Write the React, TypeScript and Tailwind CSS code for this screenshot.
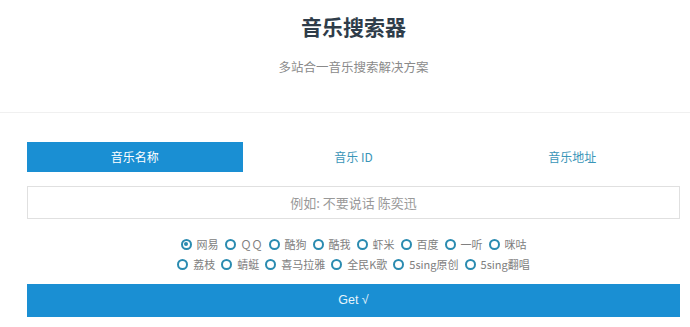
import React, { useState } from 'react';

const tabs = ['音乐名称', '音乐 ID', '音乐地址'];

const sources = [
  ['网易', 'ＱＱ', '酷狗', '酷我', '虾米', '百度', '一听', '咪咕'],
  ['荔枝', '蜻蜓', '喜马拉雅', '全民K歌', '5sing原创', '5sing翻唱'],
];

const Radio: React.FC<{ label: string; checked: boolean; onPick: () => void }> = ({ label, checked, onPick }) => (
  <label className="flex items-center gap-[5px] cursor-pointer" onClick={onPick}>
    <span className="w-[11px] h-[11px] rounded-full border-2 border-[#2a8bb0] flex items-center justify-center">
      {checked && <span className="w-[4px] h-[4px] rounded-full bg-[#2a8bb0]" />}
    </span>
    <span className="text-[11px] text-[#808080]">{label}</span>
  </label>
);

export default function App() {
  const [tab, setTab] = useState(0);
  const [source, setSource] = useState('网易');

  return (
    <div className="w-full overflow-hidden bg-white" style={{ fontFamily: '"Noto Sans CJK SC", "Noto Sans", sans-serif' }}>
      <div className="w-[707px]">
        <header className="h-[113px] border-b border-[#f0f0f0] flex flex-col items-center pt-[11px]">
          <h1 className="text-[21px] font-bold text-[#2f3d4a] leading-[30px]">音乐搜索器</h1>
          <p className="mt-[17px] text-[12.5px] text-[#8a8a8a] leading-[18px]">多站合一音乐搜索解决方案</p>
        </header>

        <main className="px-[27px] pt-[29px]">
          <div className="grid grid-cols-3 gap-[3px]">
            {tabs.map((t, i) => (
              <button
                key={t}
                onClick={() => setTab(i)}
                className={
                  i === tab
                    ? 'h-[30px] bg-[#1a8fd3] text-white text-[12px]'
                    : 'h-[30px] bg-white text-[#3a95b8] text-[12px]'
                }
              >
                {t}
              </button>
            ))}
          </div>

          <input
            className="mt-[14px] w-full h-[33px] border border-[#e0e0e0] text-center text-[13px] outline-none placeholder:text-[#999]"
            placeholder="例如: 不要说话 陈奕迅"
          />

          <div className="mt-[15px] flex flex-col items-center">
            {sources.map((row, r) => (
              <div key={r} className="h-[20px] flex items-center gap-x-[6px]">
                {row.map((s) => (
                  <Radio key={s} label={s} checked={source === s} onPick={() => setSource(s)} />
                ))}
              </div>
            ))}
          </div>

          <button
            className="mt-[10px] w-full h-[33px] bg-[#1a8fd3] text-[#e8f4fb] text-[12.5px]"
            style={{ fontFamily: '"Liberation Sans", "Noto Sans CJK SC", sans-serif' }}
          >
            Get √
          </button>
        </main>
      </div>
    </div>
  );
}
